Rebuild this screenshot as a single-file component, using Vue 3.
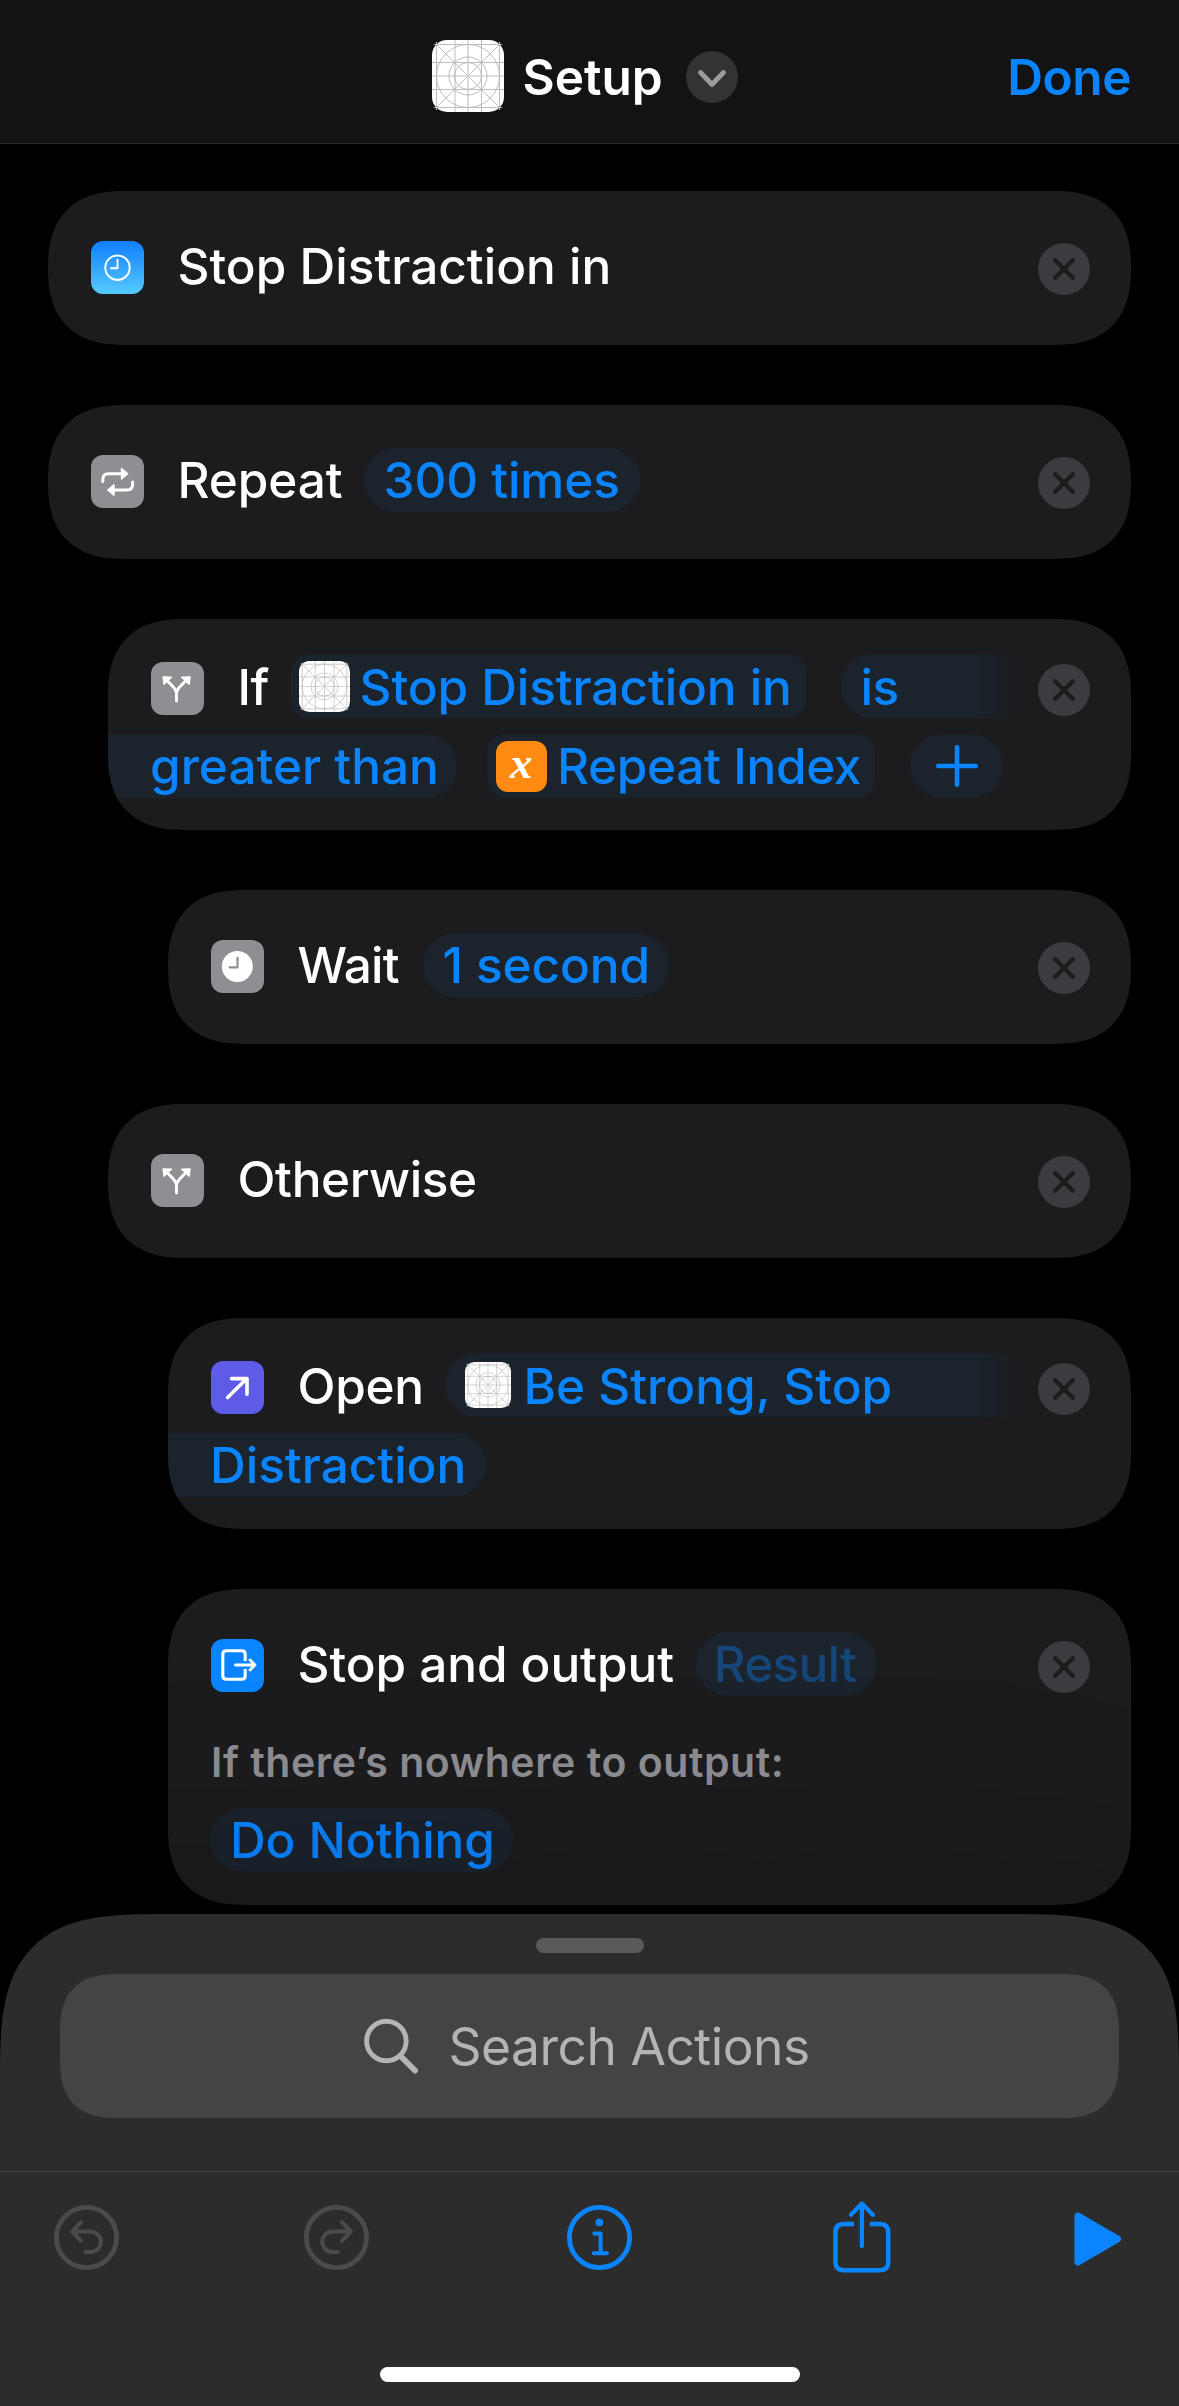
<script setup>
import { h } from 'vue'

const AppIcon = () =>
  h('svg', { viewBox: '0 0 72 72', class: 'app-icon' }, [
    h('rect', { width: 72, height: 72, rx: 15, fill: '#fff' }),
    h('g', { fill: 'none', stroke: '#bdbdbd', 'stroke-width': 1 }, [
      h('path', { d: 'M4.5 2V70M23 0V72M36 0V72M49.5 0V72M67.5 2V70M2 4.5H70M0 22.5H72M0 49.5H72M2 67.5H70M4 4L68 68M68 4L4 68' }),
      h('path', { d: 'M0 36H72', stroke: '#d6d6d6', 'stroke-width': 1.6 }),
      h('circle', { cx: 36, cy: 36, r: 31.5 }),
      h('circle', { cx: 36, cy: 36, r: 19 }),
      h('circle', { cx: 36, cy: 36, r: 13.5 }),
    ]),
  ])

const CloseButton = () =>
  h('svg', { viewBox: '0 0 52 52', class: 'close' }, [
    h('circle', { cx: 26, cy: 26, r: 26, fill: '#3c3b40' }),
    h('path', { d: 'M17.2 17.2L34.8 34.8M34.8 17.2L17.2 34.8', stroke: '#1c1c1e', 'stroke-width': 4.2, 'stroke-linecap': 'round' }),
  ])

const ForkIcon = () =>
  h('svg', { viewBox: '0 0 53 53', class: 'tile grey' }, [
    h('path', { d: 'M25.5 39V31.5C25.5 26.5 20.5 23.5 16 18.5M25.5 31.5C25.5 26.5 30.5 23.5 35 18.5', fill: 'none', stroke: '#fff', 'stroke-width': 2.9, 'stroke-linecap': 'round' }),
    h('path', { d: 'M12 14.8L20.5 15.2L13 22.3ZM39.2 14.8L30.7 15.2L38.2 22.3Z', fill: '#fff', stroke: '#fff', 'stroke-width': 1.2, 'stroke-linejoin': 'round' }),
  ])
</script>

<template>
  <div class="screen">
    <header class="nav">
      <AppIcon />
      <h1>Setup</h1>
      <svg class="chevron" viewBox="0 0 52 52">
        <circle cx="26" cy="26" r="26" fill="#333336" />
        <path d="M14.5 21.5L26 33.5L37.5 21.5" fill="none" stroke="#9b9ba0" stroke-width="4.8" stroke-linecap="round" stroke-linejoin="round" />
      </svg>
      <span class="done">Done</span>
    </header>

    <main class="actions">
      <section class="card">
        <div class="body">
          <div class="row">
            <svg class="tile sky" viewBox="0 0 53 53" fill="none" stroke="#fff" stroke-linecap="round" stroke-linejoin="round">
              <circle cx="26.5" cy="26.7" r="12.2" stroke-width="2" />
              <path d="M26.5 18.8V27.3H19.8" stroke-width="1.9" />
            </svg>
            <span class="label">Stop Distraction in</span>
          </div>
        </div>
        <CloseButton />
      </section>

      <section class="card">
        <div class="body">
          <div class="row">
            <svg class="tile grey" viewBox="0 0 53 53">
              <path d="M11.8 26.5V24.5C11.8 20.5 13.8 18.7 17.5 18.7H30.5M41.6 27V29.2C41.6 33.2 39.6 35 36 35H23" fill="none" stroke="#fff" stroke-width="3" stroke-linecap="round" />
              <path d="M30.5 13.5V24L36.7 18.7ZM23 29.7V40.3L16.8 35Z" fill="#fff" stroke="#fff" stroke-width="1.4" stroke-linejoin="round" />
            </svg>
            <span class="label repeat">Repeat</span>
            <span class="pill times">300 times</span>
          </div>
        </div>
        <CloseButton />
      </section>

      <section class="card level1 tall">
        <div class="body">
          <div class="row">
            <ForkIcon />
            <span class="label if">If</span>
            <span class="pill variable source"><AppIcon />Stop Distraction in</span>
            <span class="pill open-end condition">is</span>
          </div>
          <div class="row">
            <span class="pill carry greater">greater than</span>
            <span class="pill variable index"><i class="var-icon">x</i>Repeat Index</span>
            <span class="pill plus">
              <svg viewBox="0 0 42 42"><path d="M21 2.3V39.7M2.3 21H39.7" stroke="#0a84ff" stroke-width="4.6" stroke-linecap="round" /></svg>
            </span>
          </div>
        </div>
        <CloseButton />
      </section>

      <section class="card level2">
        <div class="body">
          <div class="row">
            <svg class="tile grey" viewBox="0 0 53 53">
              <circle cx="26.3" cy="26.5" r="15.5" fill="#fff" />
              <path d="M26.5 17.8V27.3H18.6" fill="none" stroke="#8e8e93" stroke-width="2.2" stroke-linecap="round" stroke-linejoin="round" />
            </svg>
            <span class="label wait">Wait</span>
            <span class="pill second">1 second</span>
          </div>
        </div>
        <CloseButton />
      </section>

      <section class="card level1">
        <div class="body">
          <div class="row">
            <ForkIcon />
            <span class="label otherwise">Otherwise</span>
          </div>
        </div>
        <CloseButton />
      </section>

      <section class="card level2 tall">
        <div class="body">
          <div class="row">
            <svg class="tile indigo" viewBox="0 0 53 53">
              <path d="M16.6 36.5L35.6 17.8M20.5 17.6H36V33.2" fill="none" stroke="#fff" stroke-width="3.6" stroke-linecap="round" stroke-linejoin="round" />
            </svg>
            <span class="label open">Open</span>
            <span class="pill open-end target"><AppIcon />Be Strong, Stop</span>
          </div>
          <div class="row">
            <span class="pill carry distraction">Distraction</span>
          </div>
        </div>
        <CloseButton />
      </section>

      <section class="card level2 output">
        <div class="body">
          <div class="row">
            <svg class="tile blue" viewBox="0 0 53 53" fill="none" stroke="#fff" stroke-linecap="round" stroke-linejoin="round">
              <path d="M34.2 22V15.2C34.2 12.8 33 11.7 30.7 11.7H15.3C13 11.7 11.8 12.8 11.8 15.2V36.8C11.8 39.2 13 40.3 15.3 40.3H30.7C33 40.3 34.2 39.2 34.2 36.8V30" stroke-width="3.1" stroke-linecap="butt" />
              <path d="M24.5 26H43.5M39 20.9L44 26L39 31.1" stroke-width="2.8" />
            </svg>
            <span class="label stop">Stop and output</span>
            <span class="pill result">Result</span>
          </div>
          <p class="hint">If there’s nowhere to output:</p>
          <div class="row">
            <span class="pill nothing">Do Nothing</span>
          </div>
        </div>
        <CloseButton />
      </section>
    </main>

    <footer class="sheet">
      <div class="grabber"></div>
      <div class="search">
        <svg viewBox="0 0 56 56" fill="none" stroke="#b4b4b7" stroke-linecap="round">
          <circle cx="23.4" cy="23" r="19.8" stroke-width="4.9" />
          <path d="M38 38.5L52 52.5" stroke-width="6" />
        </svg>
        <span>Search Actions</span>
      </div>
      <div class="toolbar">
        <svg class="round" viewBox="0 0 65 65" fill="none" stroke="#4b4b4b" stroke-linecap="round" stroke-linejoin="round">
          <circle cx="32.5" cy="32.5" r="30.1" stroke-width="4.8" />
          <path d="M27 17.2L18 26.5L27 35.8M18.5 26.5H36.5A10.2 10.2 0 0 1 36.5 47H31.2" stroke-width="3.9" />
        </svg>
        <svg class="round redo" viewBox="0 0 65 65" fill="none" stroke="#4b4b4b" stroke-linecap="round" stroke-linejoin="round">
          <circle cx="32.5" cy="32.5" r="30.1" stroke-width="4.8" />
          <path d="M38 17.2L47 26.5L38 35.8M46.5 26.5H28.5A10.2 10.2 0 0 0 28.5 47H33.8" stroke-width="3.9" />
        </svg>
        <svg class="round info" viewBox="0 0 65 65" fill="none" stroke="#0a84ff" stroke-linecap="round" stroke-linejoin="round">
          <circle cx="32.5" cy="32.5" r="30.1" stroke-width="4.8" />
          <circle cx="32.4" cy="17.3" r="3.9" fill="#0a84ff" stroke="none" />
          <path d="M27.3 28.6H33.6V48.3M26.8 48.3H40" stroke-width="4" />
        </svg>
        <svg class="share" viewBox="0 0 58 74" fill="none" stroke="#0a84ff" stroke-linecap="round" stroke-linejoin="round">
          <path d="M21 22.9H11C5.5 22.9 2.5 25.5 2.5 31V61C2.5 66.5 5.5 69.2 11 69.2H47C52.5 69.2 55.2 66.5 55.2 61V31C55.2 25.5 52.5 22.9 47 22.9H36.8" stroke-width="4.5" stroke-linecap="butt" />
          <path d="M28.9 45V4M18 13.8L28.9 2.6L39.8 13.8" stroke-width="4.3" />
        </svg>
        <svg class="play" viewBox="0 0 48 54">
          <path d="M4 4L43.5 27L4 50Z" fill="#0a84ff" stroke="#0a84ff" stroke-width="7" stroke-linejoin="round" />
        </svg>
      </div>
      <div class="home"></div>
    </footer>
  </div>
</template>

<style>
html,
body {
  background: #000;
}
</style>

<style scoped>
.screen {
  width: 1179px;
  height: 2406px;
  overflow: hidden;
  display: flex;
  flex-direction: column;
  background: #000;
  color: #fff;
  font: 500 49.5px/64px Inter, 'Liberation Sans', sans-serif;
  white-space: nowrap;
}

svg {
  display: block;
  flex: none;
}

.nav {
  box-sizing: border-box;
  flex: none;
  display: flex;
  align-items: center;
  height: 144px;
  padding: 10px 48px 0 432px;
  background: #131313;
  border-bottom: 1px solid #2a2a2a;
}

.nav .app-icon {
  width: 72px;
  height: 72px;
  margin-bottom: 1px;
}

h1 {
  margin: 0 0 0 18.5px;
  font: inherit;
  font-weight: 600;
}

.chevron {
  width: 52px;
  height: 52px;
  margin-left: 23.5px;
}

.done {
  margin-left: auto;
  color: #0a84ff;
  font-weight: 600;
  letter-spacing: -0.4px;
}

.actions {
  flex: none;
  display: flex;
  flex-direction: column;
  gap: 60px;
  padding: 47px 48px 9px;
}

.card {
  box-sizing: border-box;
  display: flex;
  justify-content: space-between;
  height: 154px;
  padding: 43px 41px 0 43px;
  overflow: hidden;
  background: #1c1c1e;
  border-radius: 66px;
}

@supports (corner-shape: superellipse(1.3)) {
  .card {
    border-radius: 77px;
    corner-shape: superellipse(1.3);
  }
}

.level1 {
  margin-left: 60px;
}

.level2 {
  margin-left: 120px;
}

.tall {
  height: 211px;
  padding-top: 35px;
}

.output {
  height: 316px;
}

.close {
  width: 52px;
  height: 52px;
  margin-top: 9px;
}

.tall .close {
  margin-top: 10px;
}

.body {
  display: flex;
  flex-direction: column;
  gap: 16px;
  width: 0;
}

.row {
  display: flex;
  align-items: center;
  height: 64px;
}

.tile {
  width: 53px;
  height: 53px;
  margin-top: 3px;
  border-radius: 12px;
}

.tall .tile {
  margin-top: 5px;
}

.grey {
  background: #8e8e93;
}

.sky {
  background: linear-gradient(#0f7fff, #56caff);
}

.indigo {
  background: #5e5ce6;
}

.blue {
  background: #0a84ff;
}

.label {
  flex: none;
  margin-left: 33.5px;
}

.pill {
  box-sizing: border-box;
  flex: none;
  display: flex;
  align-items: center;
  height: 64px;
  padding: 0 0 0 20px;
  background: #1b232d;
  border-radius: 32px;
  color: #0a84ff;
}

.tall .row:first-child .label,
.tall .row:first-child .pill {
  padding-top: 2px;
}

.tall .pill .app-icon {
  margin-bottom: 2px;
}

.variable {
  padding-left: 8px;
  border-radius: 18px;
}

.open-end {
  border-radius: 32px 0 0 32px;
  background: linear-gradient(to left, rgba(27, 35, 45, 0) 0, #1b232d 42px);
}

.carry {
  margin-left: -43px;
  padding-left: 42px;
  border-radius: 0 32px 32px 0;
}

.repeat {
  width: 186px;
  letter-spacing: -0.1px;
}

.times {
  width: 276px;
  letter-spacing: -0.1px;
}

.if {
  width: 53px;
  letter-spacing: -0.5px;
}

.source {
  width: 515px;
  letter-spacing: -0.08px;
}

.source .app-icon {
  width: 51px;
  height: 51px;
  margin-right: 10px;
}

.condition {
  width: 177px;
  margin-left: 35px;
  padding-left: 20px;
  letter-spacing: -0.5px;
}

.greater {
  width: 349px;
}

.index {
  width: 388px;
  margin-left: 30px;
  padding-left: 9px;
  letter-spacing: -0.35px;
}

.var-icon {
  box-sizing: border-box;
  width: 51px;
  height: 51px;
  margin-right: 10px;
  padding-right: 1px;
  border-radius: 12px;
  background: #ff8a12;
  color: #fff;
  font: italic bold 45px/45px 'Liberation Serif', serif;
  text-align: center;
}

.plus {
  width: 93px;
  margin-left: 35px;
  padding: 0;
  justify-content: center;
}

.plus svg {
  width: 42px;
  height: 42px;
}

.wait {
  width: 125px;
  letter-spacing: -0.8px;
}

.second {
  width: 246px;
  letter-spacing: -0.1px;
}

.otherwise {
  letter-spacing: -0.35px;
}

.open {
  width: 147px;
  letter-spacing: -0.3px;
}

.target {
  width: 573px;
}

.target .app-icon {
  width: 46px;
  height: 46px;
  margin-right: 13px;
}

.distraction {
  width: 318px;
}

.stop {
  width: 398px;
  letter-spacing: -0.07px;
}

.result {
  width: 181px;
  padding-left: 18px;
  color: #164677;
  letter-spacing: -0.7px;
}

.hint {
  margin: 20px 0 0;
  color: #8c8c91;
  font-size: 41px;
  font-weight: 600;
  line-height: 60px;
  letter-spacing: 0.55px;
}

.nothing {
  width: 303px;
  margin-left: -1px;
  letter-spacing: -0.1px;
}

.sheet {
  flex: 1;
  display: flex;
  flex-direction: column;
  align-items: center;
  background: #2c2c2c;
  border-radius: 112px 112px 0 0;
  box-shadow: 0 0 220px 40px rgba(0, 0, 0, 0.2);
}

@supports (corner-shape: superellipse(1.6)) {
  .sheet {
    border-radius: 166px 166px 0 0;
    corner-shape: superellipse(1.65);
  }
}

.grabber {
  width: 108px;
  height: 15px;
  margin-top: 24px;
  border-radius: 8px;
  background: #5a5a5a;
}

.search {
  box-sizing: border-box;
  display: flex;
  align-items: center;
  width: 1059px;
  height: 144px;
  margin-top: 21px;
  padding-left: 303px;
  border-radius: 46px;
  background: #444446;
  color: #b4b4b7;
  font-size: 51.5px;
  font-weight: 400;
  letter-spacing: -0.5px;
}

@supports (corner-shape: superellipse(1.4)) {
  .search {
    border-radius: 60px;
    corner-shape: superellipse(1.4);
  }
}

.search svg {
  width: 56px;
  height: 56px;
}

.search span {
  margin-left: 29.5px;
}

.toolbar {
  box-sizing: border-box;
  display: flex;
  align-items: flex-start;
  align-self: stretch;
  height: 196px;
  margin-top: 53px;
  padding: 33px 0 0 54px;
  border-top: 1px solid #484848;
}

.round {
  width: 65px;
  height: 65px;
}

.redo {
  margin-left: 185px;
}

.info {
  margin-left: 198px;
}

.share {
  width: 58px;
  height: 74px;
  margin: -4px 0 0 201px;
}

.play {
  width: 48px;
  height: 54px;
  margin: 7px 0 0 183px;
}

.home {
  width: 420px;
  height: 15px;
  border-radius: 8px;
  background: #fff;
}
</style>
